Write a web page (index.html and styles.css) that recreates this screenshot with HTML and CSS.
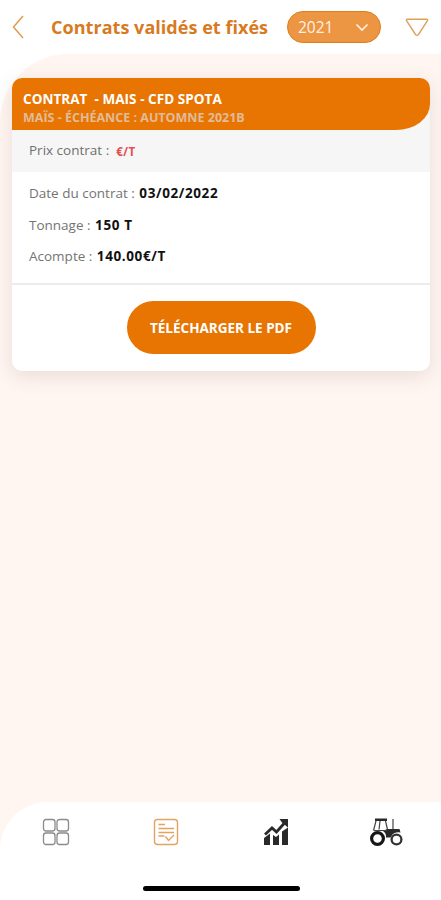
FILE: index.html
```html
<!DOCTYPE html>
<html lang="fr">
<head>
<meta charset="utf-8">
<title>Contrats validés et fixés</title>
<link rel="stylesheet" href="styles.css">
</head>
<body>
<div class="app">
  <header class="topbar">
    <svg class="back" width="12" height="24" viewBox="0 0 12 24"><path d="M11 1 1.500 12 11 23"/></svg>
    <h1 class="title">Contrats validés et fixés</h1>
    <div class="year">
      <span>2021</span>
      <svg width="14" height="9" viewBox="0 0 14 9"><path d="M1.500 1.500 7 7 12.500 1.500"/></svg>
    </div>
    <svg class="filter" width="24" height="19" viewBox="0 0 24 19"><path d="M2 1.200H22Q23 1.500 22.300 3L13.500 16.500Q12 18.300 10.500 16.500L1.700 3Q1 1.500 2 1.200Z"/></svg>
  </header>
  <main class="content">
    <article class="card">
      <div class="card-top">
        <div class="card-head">
          <div class="name">CONTRAT&nbsp; - MAIS - CFD SPOTA</div>
          <div class="term">MAÏS - ÉCHÉANCE : AUTOMNE 2021B</div>
        </div>
        <div class="price"><span class="label">Prix contrat :</span><b>€/T</b></div>
      </div>
      <div class="details">
        <div class="row"><span>Date du contrat :</span> <b>03/02/2022</b></div>
        <div class="row"><span>Tonnage :</span> <b>150 T</b></div>
        <div class="row"><span>Acompte :</span> <b>140.00€/T</b></div>
      </div>
      <div class="action"><button class="download">TÉLÉCHARGER LE PDF</button></div>
    </article>
  </main>
  <nav class="tabs">
    <div class="icons">
      <svg class="grid" width="28" height="28" viewBox="0 0 28 28"><rect x="1.500" y="1.500" width="11.500" height="11.500" rx="2.500"/><rect x="15" y="1.500" width="11.500" height="11.500" rx="2.500"/><rect x="1.500" y="15" width="11.500" height="11.500" rx="2.500"/><rect x="15" y="15" width="11.500" height="11.500" rx="2.500"/></svg>
      <svg class="doc" width="28" height="28" viewBox="0 0 28 28"><rect x="2.500" y="1.500" width="23" height="25" rx="3"/><path d="M6.500 6.500H13M6.500 10.500H22M6.500 14.500H22M6.500 18H12.500M13.500 18.500 16.500 22.500 22 17"/></svg>
      <svg class="chart" width="28" height="28" viewBox="0 0 28 28"><path class="solid" d="M2 20 8 15.500V27H2ZM11 17 14 19 17 16.500V27H11ZM20 13.500 26 9.500V27H20Z"/><path class="line" d="M3 16.500 10 10 14.500 14 22.500 5"/><path class="solid" d="M17.500 1H26V9.500L23 7 20 4.500Z"/></svg>
      <svg class="tractor" width="34" height="28" viewBox="0 0 34 28"><path class="solid" d="M6 .5H18V3H6ZM18 11H30.500L31.500 14.500Q25 13.500 22.500 18L21.500 19.500H17Q17.500 15 14 13Z"/><path class="thin" d="M7 3 4.500 12.500M11 3 10 11.500M16.500 3 18.500 11.500M5 12.500H18M24 11V1"/><circle class="rear" cx="8.500" cy="20.500" r="5.900"/><circle class="front" cx="27.500" cy="21.500" r="4.900"/></svg>
    </div>
    <div class="home"></div>
  </nav>
</div>
</body>
</html>
```
FILE: styles.css
```css
* { box-sizing: border-box; }
body { margin: 0; background: #fff; font-family: "Open Sans", sans-serif; }
svg { display: block; fill: none; flex: none; }
.app { width: 441px; height: 900px; display: flex; flex-direction: column; overflow: hidden; }

.topbar { height: 54px; flex: none; display: flex; align-items: center; padding: 0 12px; }
.back { stroke: #e19b51; stroke-width: 1.5; }
.title { margin: 0 0 0 27px; width: 218px; font-size: 18px; line-height: 26px; font-weight: 700; letter-spacing: .04px; white-space: nowrap; color: #d87a22; }
.year { width: 94px; height: 32px; margin-left: 18px; padding: 0 11px 0 10px; display: flex; align-items: center; justify-content: space-between; border: 1px solid #dc7f1d; border-radius: 16px; background: #ec9543; color: #fff1e2; font-size: 15.500px; }
.year svg { stroke: #fff1e2; stroke-width: 1.7; }
.filter { margin-left: 24px; stroke: #dda15f; stroke-width: 1.4; }

.content { flex: 1; padding: 24px 11px 0 12px; background: #fff5f1; border-top-left-radius: 68px; }
.card { height: 293px; border-radius: 10px; background: #fff; box-shadow: 0 5px 20px rgba(110, 90, 70, .15); overflow: hidden; }
.card-top { height: 94px; background: #f6f6f6; }
.card-head { height: 52px; padding: 12px 11px 0; background: #e87502; border-bottom-right-radius: 34px 26px; font-weight: 700; white-space: nowrap; }
.name { font-size: 13.500px; line-height: 18px; letter-spacing: .04px; color: #fff; }
.term { font-size: 12.500px; line-height: 19px; color: #e2bb98; }
.price { height: 42px; padding: 0 17px 2px; display: flex; align-items: center; font-size: 13.500px; color: #707070; }
.price b { margin-left: 7px; font-size: 11.500px; letter-spacing: .5px; color: #e34e50; padding-top: 2px; }
.details { height: 113px; padding: 6px 17px 0; border-bottom: 2px solid #ececec; }
.row { height: 31.500px; line-height: 31.500px; font-size: 13.500px; color: #747474; white-space: nowrap; }
.row b { margin-left: 1px; font-weight: 700; letter-spacing: .6px; color: #111; }
.action { height: 86px; display: flex; justify-content: center; padding-top: 16px; }
.download { width: 189px; height: 53px; padding: 0; border: 0; border-radius: 27px; background: #e87502; color: #fff; font: 700 13.500px "Open Sans", sans-serif; white-space: nowrap; }

.tabs { height: 98px; flex: none; background: linear-gradient(#fff, #fff) 0 48px / 100% 50px no-repeat, radial-gradient(circle at 48px 48px, #fff 47.500px, #fff5f1 48.500px) 0 0 / 48px 48px no-repeat, #fff; }
.icons { height: 60px; padding-left: 42px; display: flex; gap: 82px; align-items: center; }
.tractor { margin-left: -3px; }
.grid { stroke: #8b8b8b; stroke-width: 1.300; }
.doc { stroke: #e2a361; stroke-width: 1.400; }
.solid { fill: #292929; }
.line { stroke: #292929; stroke-width: 2.800; }
.thin { stroke: #444; stroke-width: 1.200; }
.rear { stroke: #161616; stroke-width: 3.200; }
.front { stroke: #333; stroke-width: 2.300; }
.home { width: 157px; height: 5px; margin: 24px 0 0 143px; border-radius: 3px; background: #000; }
```
